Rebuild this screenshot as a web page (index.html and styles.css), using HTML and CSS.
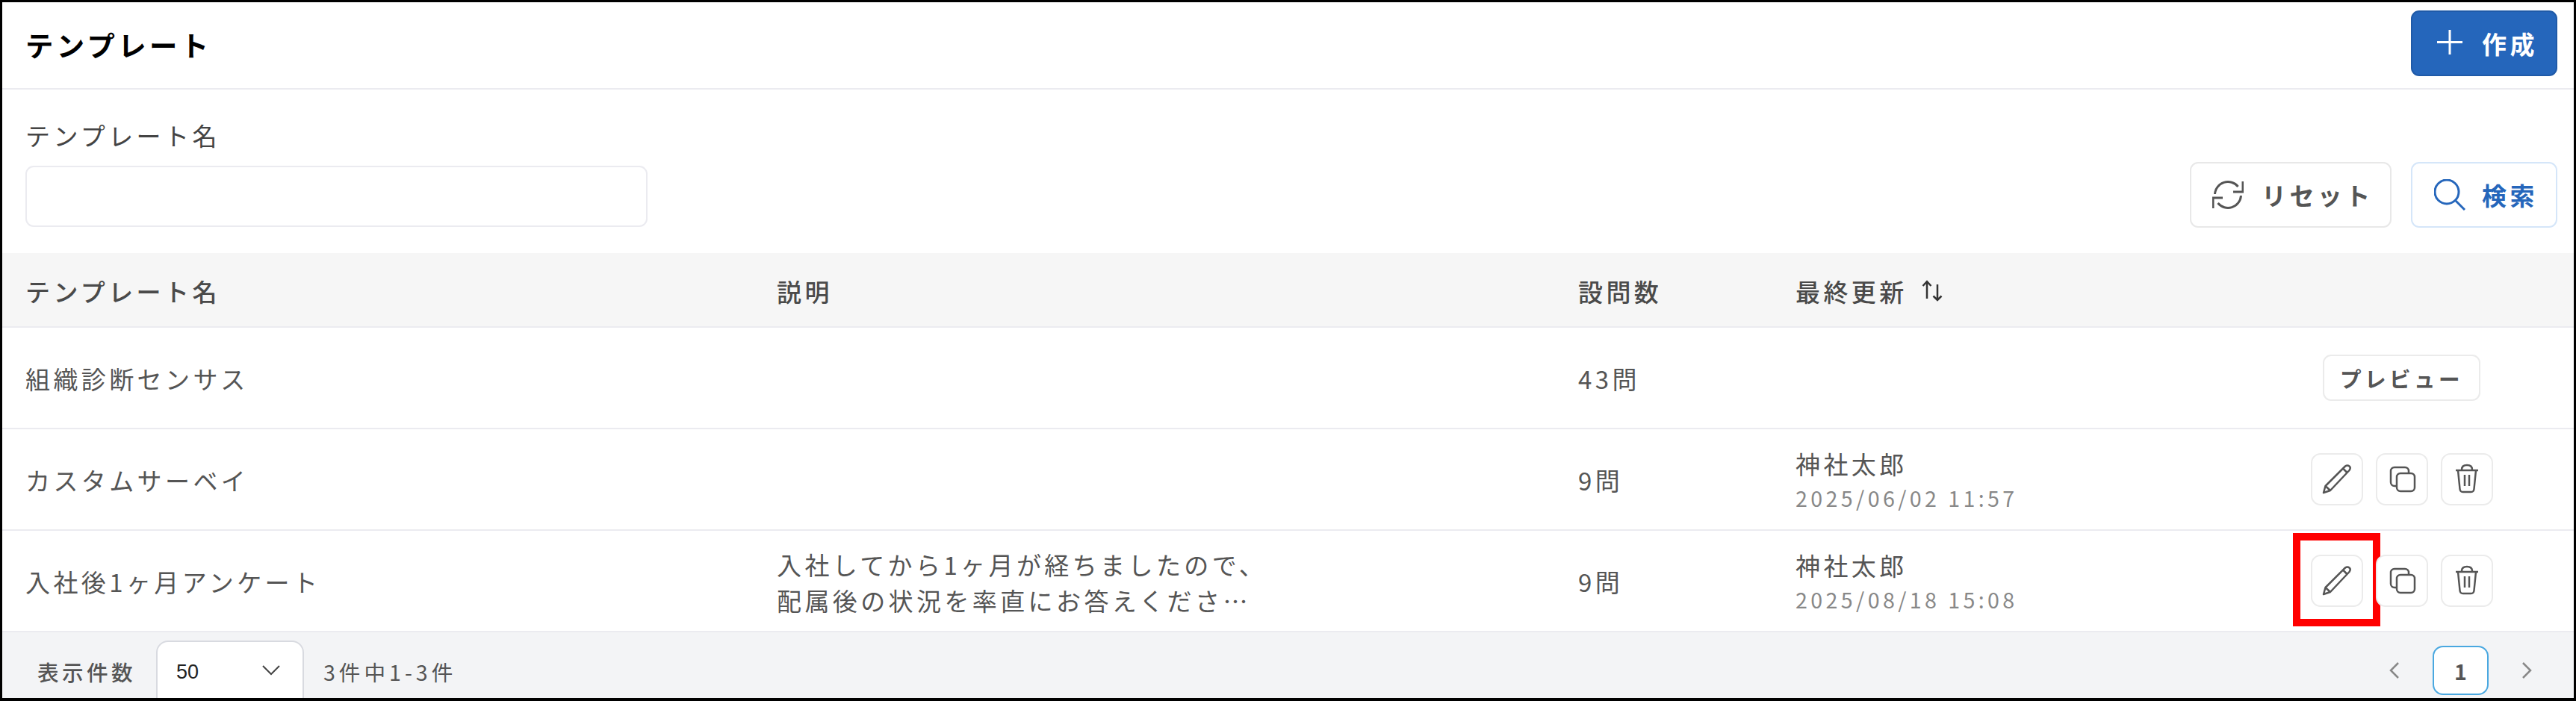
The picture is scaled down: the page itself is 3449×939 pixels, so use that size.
FILE: index.html
```html
<!DOCTYPE html>
<html lang="ja">
<head>
  <meta charset="UTF-8" />
  <meta name="viewport" content="width=device-width, initial-scale=1.0"/>
  <title>テンプレート</title>
  <link rel="stylesheet" href="styles.css">
</head>
<body>
  <div class="frame">
    <div class="top-bar">
      <h1 class="page-title">テンプレート</h1>
      <button class="btn btn-primary">
        <svg class="btn-icon" viewBox="0 0 42 42"><path d="M19 3v33M2 19.500h34"/></svg>
        <span>作成</span>
      </button>
    </div>

    <div class="search-form">
      <div class="field">
        <label class="field-label">テンプレート名</label>
        <input class="field-input" type="text" />
      </div>
      <div class="search-actions">
        <button class="btn btn-default">
          <svg class="btn-icon" viewBox="0 0 42 42"><path d="M3.500 20a17.500 17.500 0 0 1 31-10"/><path d="M41 3v14H28"/><path d="M38.500 22a17.500 17.500 0 0 1-31 10"/><path d="M1 39V25h13"/></svg>
          <span>リセット</span>
        </button>
        <button class="btn btn-search">
          <svg class="btn-icon" viewBox="0 0 42 42"><circle cx="17" cy="17" r="16"/><path d="M29 29l12 12"/></svg>
          <span>検索</span>
        </button>
      </div>
    </div>

    <table class="template-table">
      <colgroup>
        <col class="col-name"><col class="col-desc"><col class="col-count"><col class="col-updated"><col class="col-actions">
      </colgroup>
      <thead>
        <tr>
          <th>テンプレート名</th>
          <th>説明</th>
          <th>設問数</th>
          <th>
            <span class="sort-head">最終更新
              <svg class="sort-icon" viewBox="0 0 30 30"><path d="M7 25V2M1.500 8L7 2l5.500 6"/><path d="M21 6v21M15.500 21.500L21 27l5.500-5.500"/></svg>
            </span>
          </th>
          <th></th>
        </tr>
      </thead>
      <tbody>
        <tr>
          <td>組織診断センサス</td>
          <td></td>
          <td>43問</td>
          <td></td>
          <td class="cell-actions"><button class="preview-btn">プレビュー</button></td>
        </tr>
        <tr>
          <td>カスタムサーベイ</td>
          <td></td>
          <td>9問</td>
          <td>
            <div>神社太郎</div>
            <div class="date">2025/06/02 11:57</div>
          </td>
          <td class="cell-actions">
            <div class="icon-group">
              <button class="icon-btn">
                <svg viewBox="0 0 42 42"><path d="M3 39l2.500-9L32 3.500q3-2 5.500 0t0 5.500L12 36zM5.500 30l6.500 6M29 6.500l5.500 5.500"/></svg>
              </button>
              <button class="icon-btn">
                <svg viewBox="0 0 42 42"><rect x="6" y="5" width="24" height="25" rx="5"/><rect class="icon-front" x="14" y="13" width="24" height="24" rx="5"/></svg>
              </button>
              <button class="icon-btn">
                <svg viewBox="0 0 42 42"><path d="M6 9h30M14 8q0-6 7-6t7 6M9 9l2.500 25q.4 4 4 4h11q3.600 0 4-4L33 9M18 15v15M24 15v15"/></svg>
              </button>
            </div>
          </td>
        </tr>
        <tr>
          <td>入社後1ヶ月アンケート</td>
          <td class="cell-desc">入社してから1ヶ月が経ちましたので、<br>配属後の状況を率直にお答えくださ…</td>
          <td>9問</td>
          <td>
            <div>神社太郎</div>
            <div class="date">2025/08/18 15:08</div>
          </td>
          <td class="cell-actions">
            <div class="icon-group">
              <button class="icon-btn">
                <svg viewBox="0 0 42 42"><path d="M3 39l2.500-9L32 3.500q3-2 5.500 0t0 5.500L12 36zM5.500 30l6.500 6M29 6.500l5.500 5.500"/></svg>
                <span class="highlight-box"></span>
              </button>
              <button class="icon-btn">
                <svg viewBox="0 0 42 42"><rect x="6" y="5" width="24" height="25" rx="5"/><rect class="icon-front" x="14" y="13" width="24" height="24" rx="5"/></svg>
              </button>
              <button class="icon-btn">
                <svg viewBox="0 0 42 42"><path d="M6 9h30M14 8q0-6 7-6t7 6M9 9l2.500 25q.4 4 4 4h11q3.600 0 4-4L33 9M18 15v15M24 15v15"/></svg>
              </button>
            </div>
          </td>
        </tr>
      </tbody>
    </table>

    <div class="pager-bar">
      <div class="pager-left">
        <span class="pager-label">表示件数</span>
        <div class="page-size">
          <span>50</span>
          <svg class="page-size-arrow" viewBox="0 0 24 14"><path d="M1 1l11 11L23 1"/></svg>
        </div>
        <span class="pager-count">3件中1-3件</span>
      </div>
      <div class="pager-right">
        <svg class="pager-arrow" viewBox="0 0 14 22"><path d="M12 1L2 11l10 10"/></svg>
        <span class="page-current">1</span>
        <svg class="pager-arrow" viewBox="0 0 14 22"><path d="M2 1l10 10L2 21"/></svg>
      </div>
    </div>
  </div>
</body>
</html>
```

FILE: styles.css
```css
* {
  box-sizing: border-box;
}

html, body {
  margin: 0;
  height: 100%;
}

body {
  font-family: "Noto Sans CJK JP", "Noto Sans", sans-serif;
  color: #555;
  background: #fff;
  overflow: hidden;
}

.frame {
  display: flex;
  flex-direction: column;
  width: 3449px;
  height: 939px;
  border: 3px solid #000;
  border-bottom-width: 4px;
  overflow: hidden;
}

/* Top bar */
.top-bar {
  display: flex;
  justify-content: space-between;
  align-items: flex-start;
  height: 117px;
  padding: 11px 22px 0 31px;
  border-bottom: 2px solid #ebebf0;
}

.page-title {
  margin: 0;
  height: 88px;
  line-height: 92px;
  font-size: 37.400px;
  font-weight: 700;
  letter-spacing: 4.400px;
  color: #000;
}

/* Buttons */
.btn {
  display: flex;
  align-items: center;
  gap: 22px;
  height: 88px;
  padding: 0 0 0 31px;
  border-radius: 11px;
  font-family: inherit;
  font-size: 33px;
  font-weight: 700;
  letter-spacing: 4.400px;
  background: #fff;
}

.btn-icon {
  width: 42px;
  height: 42px;
  fill: none;
  stroke: currentColor;
  stroke-width: 3;
}

.btn-primary {
  width: 196px;
  gap: 20px;
  color: #fff;
  background: #2566bb;
  border: 2px solid #1f5aa8;
}

.btn-default {
  width: 270px;
  gap: 24px;
  padding-left: 28px;
  color: #555;
  border: 2px solid #e8e8e8;
}

.btn-search {
  width: 196px;
  padding-left: 29px;
  color: #2566bb;
  border: 2px solid #d5e6f9;
}

/* Search form */
.search-form {
  display: flex;
  justify-content: space-between;
  align-items: flex-end;
  height: 219px;
  padding: 0 22px 34px 31px;
}

.field {
  display: flex;
  flex-direction: column;
  gap: 20px;
  margin-bottom: 1px;
}

.field-label {
  font-size: 33px;
  line-height: 42px;
  letter-spacing: 4.400px;
  color: #444;
}

.field-input {
  width: 833px;
  height: 82px;
  border: 2px solid #ebebf0;
  border-radius: 11px;
  outline: none;
}

.search-actions {
  display: flex;
  gap: 26px;
}

/* Table */
.template-table {
  width: 3443px;
  table-layout: fixed;
  border-collapse: collapse;
}

.col-name { width: 1037px; }
.col-desc { width: 1073px; }
.col-count { width: 291px; }
.col-updated { width: 581px; }
.col-actions { width: 461px; }

.template-table th {
  height: 99px;
  padding: 3px 0 0;
  background: #f6f6f6;
  border-bottom: 2px solid #ebebf0;
  text-align: left;
  font-size: 33px;
  font-weight: 500;
  letter-spacing: 4.400px;
  color: #4a4a4a;
}

.template-table td {
  height: 136px;
  padding: 3px 0 0;
  border-bottom: 2px solid #ebebf0;
  font-size: 33px;
  line-height: 45px;
  letter-spacing: 4.400px;
  color: #555;
}

.template-table th:first-child,
.template-table td:first-child {
  padding-left: 31px;
}

.template-table .cell-actions {
  padding-top: 0;
  text-align: center;
}

.sort-head {
  display: inline-flex;
  align-items: center;
  gap: 19px;
}

.sort-icon {
  width: 30px;
  height: 30px;
  fill: none;
  stroke: #333;
  stroke-width: 2.500;
}

.template-table .cell-desc {
  line-height: 48px;
}

.date {
  font-size: 28.600px;
  line-height: 45px;
  letter-spacing: 4.400px;
  color: #888;
}

.preview-btn {
  width: 211px;
  height: 62px;
  padding: 0;
  background: #fff;
  border: 2px solid #ebebeb;
  border-radius: 11px;
  font-family: inherit;
  font-size: 28.600px;
  font-weight: 700;
  letter-spacing: 4.400px;
  color: #555;
}

.icon-group {
  display: flex;
  justify-content: center;
  gap: 17px;
}

.icon-btn {
  position: relative;
  display: flex;
  align-items: center;
  justify-content: center;
  width: 70px;
  height: 70px;
  padding: 0;
  background: #fff;
  border: 2px solid #ebebeb;
  border-radius: 13px;
}

.icon-btn svg {
  width: 42px;
  height: 42px;
  fill: none;
  stroke: #555;
  stroke-width: 2.500;
  stroke-linejoin: round;
}

.icon-btn .icon-front {
  fill: #fff;
}

/* red annotation around the edit button */
.highlight-box {
  position: absolute;
  top: -31px;
  left: -26px;
  width: 117px;
  height: 125px;
  border: 10px solid #f00;
}

/* Pager */
.pager-bar {
  display: flex;
  flex: 1;
  justify-content: space-between;
  background: #f3f4f6;
  padding: 11px 0 0 47px;
  overflow: hidden;
}

.pager-left {
  display: flex;
  align-items: flex-start;
}

.pager-label,
.pager-count {
  font-size: 28.600px;
  line-height: 84px;
  letter-spacing: 4.400px;
  color: #555;
}

.pager-count {
  letter-spacing: 5px;
}

.pager-label {
  font-weight: 500;
}

.page-size {
  display: flex;
  justify-content: space-between;
  align-items: center;
  width: 198px;
  height: 100px;
  margin: 0 26px 0 27px;
  padding: 0 30px 16px 25px;
  background: #fff;
  border: 2px solid #d8dae0;
  border-radius: 16px;
  font-family: "Liberation Sans", sans-serif;
  font-size: 27px;
  color: #222;
}

.page-size-arrow {
  width: 24px;
  height: 14px;
  margin-bottom: 4px;
  fill: none;
  stroke: #444;
  stroke-width: 2;
}

.pager-right {
  display: flex;
  align-items: flex-start;
  gap: 44px;
  padding-right: 56px;
}

.pager-arrow {
  width: 14px;
  height: 22px;
  margin-top: 29px;
  fill: none;
  stroke: #888;
  stroke-width: 2.500;
}

.page-current {
  display: flex;
  align-items: center;
  justify-content: center;
  width: 75px;
  height: 66px;
  margin-top: 7px;
  background: #fff;
  border: 2px solid #4aa8e0;
  border-radius: 14px;
  font-size: 28.600px;
  font-weight: 700;
  color: #555;
}
```
